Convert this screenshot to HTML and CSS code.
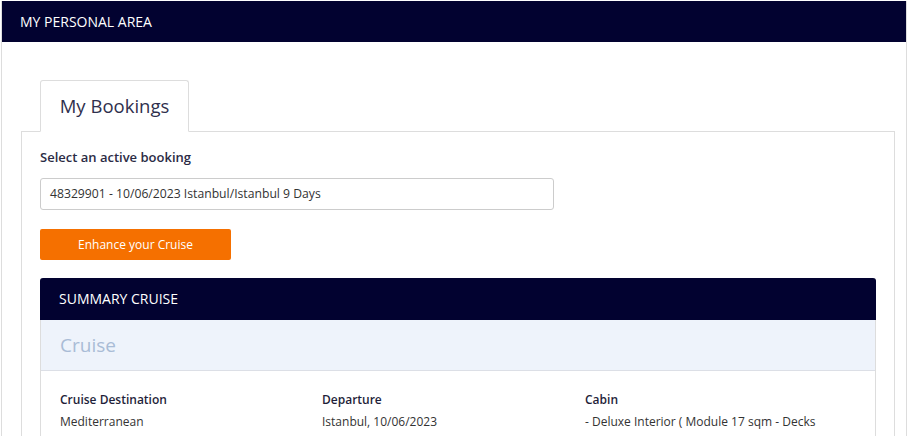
FILE: index.html
```html
<!DOCTYPE html>
<html lang="en">
<head>
  <meta charset="UTF-8">
  <title>My Personal Area</title>
  <link rel="stylesheet" href="styles.css">
</head>
<body>

  <div class="area">
    <div class="area-head">MY PERSONAL AREA</div>

    <div class="area-body">
      <!-- tabs -->
      <div class="tabs">
        <div class="tab active">My Bookings</div>
      </div>

      <div class="tab-panel">
        <div class="field-label">Select an active booking</div>
        <div class="select-box">48329901 - 10/06/2023 Istanbul/Istanbul 9 Days</div>

        <button class="btn-orange">Enhance your Cruise</button>

        <!-- summary -->
        <div class="summary">
          <div class="summary-head">SUMMARY CRUISE</div>
          <div class="summary-band">Cruise</div>
          <div class="summary-grid">
            <div class="col">
              <div class="col-title">Cruise Destination</div>
              <div class="col-text">Mediterranean</div>
            </div>
            <div class="col">
              <div class="col-title">Departure</div>
              <div class="col-text">Istanbul, 10/06/2023</div>
            </div>
            <div class="col">
              <div class="col-title">Cabin</div>
              <div class="col-text">- Deluxe Interior ( Module 17 sqm - Decks</div>
            </div>
          </div>
        </div>
      </div>
    </div>
  </div>

</body>
</html>
```

FILE: styles.css
```css
body {
  margin: 0;
  background: #fff;
  font-family: "Open Sans", "Liberation Sans", Arial, sans-serif;
  color: #333;
}
.area {
  margin: 1px 0 0 1px;
  border-left: 1px solid #ddd;
  border-right: 1px solid #ddd;
  height: 435px;
  overflow: hidden;
}
.area-head {
  background: #020230;
  color: #fff;
  font-size: 14px;
  height: 41px;
  line-height: 41px;
  padding-left: 18px;
}
.area-body {
  padding: 38px 11px 0 19px;
}
.tabs {
  display: flex;
  padding-left: 19px;
}
.tab {
  position: relative;
  margin-bottom: -1px;
  background: #fff;
  border: 1px solid #ddd;
  border-bottom-color: #fff;
  border-radius: 3px 3px 0 0;
  width: 147px;
  height: 50px;
  box-sizing: content-box;
  font-size: 18.5px;
  color: #2f2f4d;
  line-height: 50px;
  text-align: center;
}
.tab-panel {
  border: 1px solid #ddd;
  padding: 16px 18px 20px 18px;
}
.field-label {
  font-size: 13px;
  font-weight: 600;
  color: #2b2b45;
  line-height: 19px;
}
.select-box {
  margin-top: 11px;
  width: 514px;
  height: 32px;
  box-sizing: border-box;
  border: 1px solid #ccc;
  border-radius: 3px;
  font-size: 12.2px;
  line-height: 30px;
  padding-left: 9px;
  color: #333;
}
.btn-orange {
  display: block;
  margin-top: 19px;
  width: 191px;
  height: 31px;
  border: none;
  border-radius: 2px;
  background: #f57000;
  color: #fff;
  font-family: inherit;
  font-size: 12px;
  cursor: pointer;
}
.summary {
  margin-top: 18px;
  border: 1px solid #ddd;
  border-top: none;
  border-radius: 3px 3px 0 0;
}
.summary-head {
  background: #020230;
  color: #fff;
  font-size: 14px;
  height: 42px;
  line-height: 42px;
  padding-left: 19px;
  border-radius: 3px 3px 0 0;
  margin: 0 -1px;
}
.summary-band {
  background: #eef3fb;
  border-bottom: 1px solid #dcdfe6;
  height: 50px;
  line-height: 50px;
  padding-left: 19px;
  font-size: 19px;
  color: #a9bcd6;
}
.summary-grid {
  display: grid;
  grid-template-columns: 262px 263px 1fr;
  padding: 19px 19px 10px 19px;
}
.col-title {
  font-size: 12px;
  font-weight: 600;
  color: #1f1f3a;
  line-height: 20px;
}
.col-text {
  font-size: 12px;
  color: #333;
  line-height: 20px;
  margin-top: 2px;
}
```
